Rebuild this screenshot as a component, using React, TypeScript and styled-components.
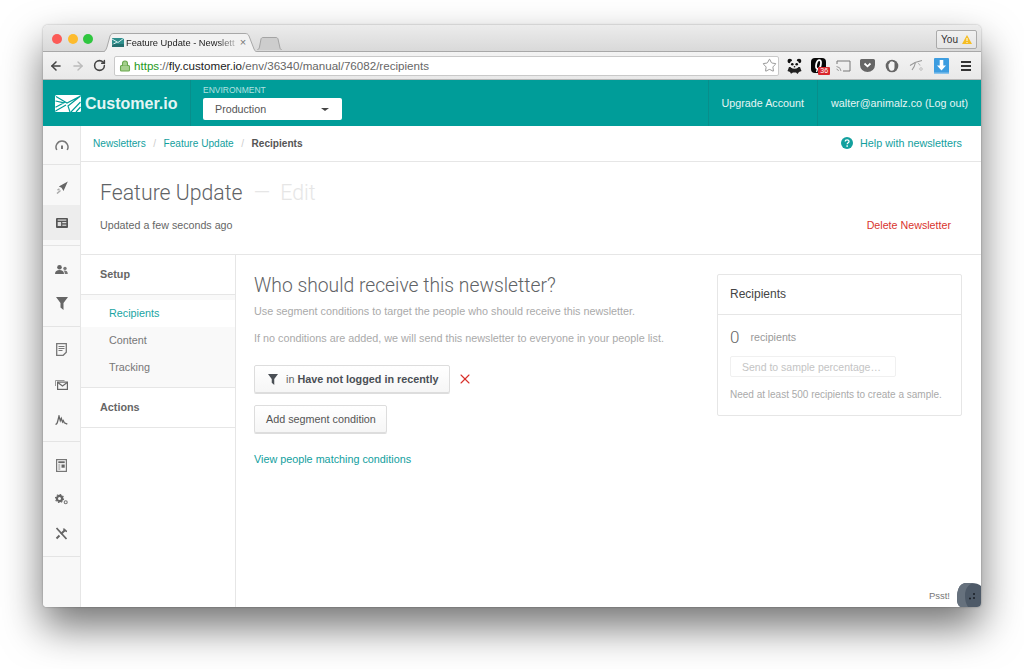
import styled, { createGlobalStyle } from "styled-components";
import { ArrowLeft, ArrowRight, RotateCw, Star, Lock, X } from "lucide-react";

const TEAL = "#009d99";
const LINK = "#12a09e";

const GlobalStyle = createGlobalStyle`
  html, body { margin: 0; padding: 0; background: #fff; }
  body {
    font-family: "Liberation Sans", Arial, sans-serif;
    font-size: 11px;
    color: #555;
    overflow: hidden;
  }
  * { box-sizing: border-box; }
`;

function GaugeIcon() {
  return (
    <svg width="14" height="11" viewBox="0 0 14 11">
      <path d="M1.800 10A6 6 0 1 1 12.200 10" fill="none" stroke="#777" strokeWidth="1.500" />
      <path d="M7 5.500v3.500" stroke="#666" strokeWidth="1.800" />
    </svg>
  );
}

function PlaneIcon() {
  return (
    <svg width="12" height="13" viewBox="0 0 12 13">
      <path d="M11.800.5 2.800 5.500l2.800 1.300L7.500 10z" fill="#666" />
      <path d="M3.500 8 1.500 9M4.500 9.500 1 12.500" stroke="#aaa" strokeWidth="1.500" />
    </svg>
  );
}

function NewsIcon() {
  return (
    <svg width="12" height="10" viewBox="0 0 12 10">
      <rect width="12" height="10" rx="1" fill="#555" />
      <rect x="1.700" y="1.500" width="8.600" height="1.200" fill="#ddd" />
      <rect x="1.700" y="4" width="3.400" height="4" fill="#ddd" />
      <rect x="6.300" y="4" width="4" height="1.200" fill="#ddd" />
      <rect x="6.300" y="6.600" width="4" height="1.200" fill="#ddd" />
    </svg>
  );
}

function PeopleIcon() {
  return (
    <svg width="13" height="9" viewBox="0 0 13 9">
      <circle cx="4.500" cy="2.300" r="2.300" fill="#666" />
      <path d="M0 9c0-3 2-4 4.500-4s4.500 1 4.500 4z" fill="#666" />
      <circle cx="10" cy="3.400" r="1.700" fill="#777" />
      <path d="M9.800 9c0-1.600-.4-2.600-1.200-3.300 2.200-.6 4.200.4 4.200 3.300z" fill="#777" />
    </svg>
  );
}

function FunnelIcon({ size = 12, color = "#666" }: { size?: number; color?: string }) {
  return (
    <svg width={size} height={size + 1} viewBox="0 0 12 13">
      <path d="M0 0h12L7.500 6v7L4.500 10.500V6z" fill={color} />
    </svg>
  );
}

function NoteIcon() {
  return (
    <svg width="11" height="13" viewBox="0 0 11 13">
      <path d="M.7.7h9.600v8.500L7.200 12.300H.7z" fill="none" stroke="#777" strokeWidth="1.300" />
      <path d="M2.500 3.500h6M2.500 5.500h6M2.500 7.500h4" stroke="#777" strokeWidth="1" />
    </svg>
  );
}

function MailStackIcon() {
  return (
    <svg width="13" height="10" viewBox="0 0 13 10">
      <path d="M.5 6V.5h9" fill="none" stroke="#999" strokeWidth="1" />
      <rect x="2.600" y="2.100" width="9.800" height="7.300" fill="#f8f8f8" stroke="#666" strokeWidth="1.200" />
      <path d="M2.800 2.500l4.700 3.500 4.700-3.500" fill="none" stroke="#666" strokeWidth="1.200" />
    </svg>
  );
}

function PulseIcon() {
  return (
    <svg width="13" height="10" viewBox="0 0 13 10">
      <path d="M.5 9.300c1.500 0 1.800-.8 2.300-3.500L4 1l1.300 4.800 1-2.500 1.200 3.700.8-1.300 1 2.100 3 1.400" fill="none" stroke="#666" strokeWidth="1.300" />
    </svg>
  );
}

function ReportIcon() {
  return (
    <svg width="11" height="13" viewBox="0 0 11 13">
      <rect x=".6" y=".6" width="9.800" height="11.800" fill="none" stroke="#777" strokeWidth="1.200" />
      <rect x="2.300" y="2.300" width="6.400" height="1.800" fill="#666" />
      <path d="M2.300 6h2M2.300 8h2M2.300 10h2" stroke="#888" strokeWidth="1" />
      <rect x="5.500" y="5.500" width="3.200" height="3.200" fill="#666" />
    </svg>
  );
}

function GearsIcon() {
  return (
    <svg width="13" height="11" viewBox="0 0 13 11">
      <circle cx="4.500" cy="4.500" r="2.600" fill="none" stroke="#666" strokeWidth="2.200" />
      <circle cx="4.500" cy="4.500" r="4" fill="none" stroke="#666" strokeWidth="1.200" strokeDasharray="1.500 1.600" />
      <circle cx="10.700" cy="8.200" r="1.500" fill="none" stroke="#777" strokeWidth="1.100" />
    </svg>
  );
}

function ToolsIcon() {
  return (
    <svg width="13" height="13" viewBox="0 0 13 13">
      <path d="M1.500 1 11.500 12" stroke="#666" strokeWidth="1.800" />
      <path d="M10.500 2.500 6 7M4.500 8.500 1.500 11.500" stroke="#666" strokeWidth="2" />
      <path d="M8.500 1.500c.5 1.500 1.500 2.500 3.500 3" fill="none" stroke="#666" strokeWidth="1.500" />
    </svg>
  );
}

function LogoIcon() {
  return (
    <svg width="26" height="17" viewBox="0 0 26 17">
      <rect width="26" height="17" rx="1.500" fill="#fff" />
      <path d="M1 1.500 12 8 25.500 1M.5 6l8.500 1.800-8.500 4.500M.5 16 11 10M25.500 1 13 11l2 6M25.500 7 16 17M25.500 12 21 17" fill="none" stroke={TEAL} strokeWidth="1.200" />
    </svg>
  );
}

function Favicon() {
  return (
    <svg width="12" height="9" viewBox="0 0 12 9">
      <rect width="12" height="9" fill="#2f8f8c" />
      <path d="M0 1l6 3.500L12 0M0 7l5-3" fill="none" stroke="#d8eeee" strokeWidth="1" />
      <rect y="6" width="12" height="3" fill="#1e5a5c" opacity=".6" />
    </svg>
  );
}

function TabShape() {
  return (
    <TabSvg viewBox="0 0 155 19" preserveAspectRatio="none">
      <path
        d="M0 19C3 19 4 17 5 14L8 3C9 1 10 .5 12 .5H143C145 .5 146 1 147 3L152 16C153 18 154 19 155 19"
        fill="#f2f2f2"
        stroke="#a8a8a8"
      />
    </TabSvg>
  );
}

function NewTabShape() {
  return (
    <TabSvg viewBox="0 0 25 13" preserveAspectRatio="none">
      <path d="M0 13C1 13 2 12 2.500 10L4 2C4.300 1 5 .5 6 .5H19C20 .5 20.700 1 21 2L23 11C23.300 12 24 13 25 13" fill="#cdcdcd" stroke="#a4a4a4" />
    </TabSvg>
  );
}

function WarningIcon() {
  return (
    <svg width="10" height="9" viewBox="0 0 10 9">
      <path d="M5 0 10 9H0z" fill="#f5bd23" />
      <path d="M5 3v3M5 7v1" stroke="#fff" strokeWidth="1" />
    </svg>
  );
}

function PandaIcon() {
  return (
    <svg width="15" height="16" viewBox="0 0 15 16">
      <circle cx="2.800" cy="3" r="2.300" fill="#111" />
      <circle cx="12" cy="3" r="2.300" fill="#111" />
      <path d="M2 9 .5 13l2.500 1 1 1.800L6 14.500h3l1.500 1.500 1.500-2 2.500-1L13 9z" fill="#222" />
      <ellipse cx="7.500" cy="6.500" rx="5" ry="4.300" fill="#efefef" />
      <circle cx="5.300" cy="6.300" r="1.300" fill="#111" />
      <circle cx="9.700" cy="6.300" r="1.300" fill="#111" />
      <circle cx="7.500" cy="8.800" r=".8" fill="#111" />
    </svg>
  );
}

function QuoteIcon() {
  return (
    <svg width="15" height="15" viewBox="0 0 15 15">
      <rect width="15" height="15" rx="4" fill="#080808" />
      <ellipse cx="7.500" cy="6.500" rx="2.300" ry="4.500" transform="rotate(12 7.500 6.500)" fill="none" stroke="#fff" strokeWidth="1.800" />
      <path d="M6.500 11 5.500 14" stroke="#fff" strokeWidth="1.300" />
    </svg>
  );
}

function CastIcon() {
  return (
    <svg width="15" height="12" viewBox="0 0 15 12">
      <path d="M1 4V1h13v10H7" fill="none" stroke="#777" strokeWidth="1" />
      <path d="M.5 6.500a5 5 0 0 1 4.500 4.500M.5 9a2.500 2.500 0 0 1 2 2" fill="none" stroke="#999" strokeWidth="1" />
    </svg>
  );
}

function PocketIcon() {
  return (
    <svg width="15" height="13" viewBox="0 0 15 13">
      <path d="M1.500 0h12A1.500 1.500 0 0 1 15 1.500V6a7.500 7 0 0 1-15 0V1.500A1.500 1.500 0 0 1 1.500 0z" fill="#666" />
      <path d="M4.500 4.500l3 2.800 3-2.800" fill="none" stroke="#fff" strokeWidth="1.800" />
    </svg>
  );
}

function ShieldIcon() {
  return (
    <svg width="14" height="14" viewBox="0 0 14 14">
      <circle cx="7" cy="7" r="6.300" fill="#666" />
      <path d="M3.500 6c0-1 .5-1.500 1-1.500L5 3c.5-.7 1.200-.7 1.500-.4.500-.5 1.300-.3 1.500.4.700-.3 1.500.2 1.500 1V8.500C9.500 10.500 8.500 11.800 6.800 11.800 5 11.800 3.500 10 3.500 6z" fill="#f4f4f4" />
    </svg>
  );
}

function StrokeIcon() {
  return (
    <svg width="16" height="13" viewBox="0 0 16 13">
      <path d="M1 6.500 6 3.500 13 1.500M6.500 3.500C6 6 5 8.500 3 11" fill="none" stroke="#999" strokeWidth="1.100" />
      <path d="M9 4.500c1 .2 1.800.8 2 2" fill="none" stroke="#aaa" strokeWidth="1" />
      <circle cx="12" cy="10" r="1.300" fill="none" stroke="#bbb" strokeWidth=".9" />
    </svg>
  );
}

function DownloadIcon() {
  return (
    <svg width="15" height="16" viewBox="0 0 15 16">
      <rect width="15" height="16" rx="1" fill="#3d9de0" />
      <path d="M5.700 2h3.600v5.500h2.700L7.500 12.500 3 7.500h2.700z" fill="#fff" />
      <rect y="14.500" width="15" height="1.500" fill="#8ac4ec" />
    </svg>
  );
}

function HelpIcon() {
  return (
    <svg width="12" height="12" viewBox="0 0 12 12">
      <circle cx="6" cy="6" r="6" fill={LINK} />
      <path d="M4.200 4.600c0-2.300 3.800-2.300 3.800-.1 0 1.300-1.800 1.400-1.800 2.700" fill="none" stroke="#fff" strokeWidth="1.300" />
      <rect x="5.400" y="8.300" width="1.500" height="1.500" fill="#fff" />
    </svg>
  );
}

function Avatar() {
  return (
    <svg width="24" height="24" viewBox="0 0 24 24">
      <path d="M8 0c6-.3 13 0 16 3v21H4C1 23 0 20 0 15 0 8 2 1 8 0z" fill="#4e5a68" />
      <path d="M8 0h8C10 2 8 7 8 13c0 4 1 8 3 11H4C1 23 0 20 0 15 0 8 2 1 8 0z" fill="#66717d" />
      <circle cx="17" cy="11" r="1" fill="#1a1f26" />
      <circle cx="13" cy="15.500" r="1" fill="#1a1f26" />
      <circle cx="17" cy="15" r="1" fill="#1a1f26" />
    </svg>
  );
}

export default function App() {
  return (
    <Page>
      <GlobalStyle />
      <BrowserWindow>
        <TabStrip>
          <Lights>
            <Light color="#fc5b57" />
            <Light color="#fdbb2d" />
            <Light color="#2fc63f" />
          </Lights>
          <Tab>
            <TabShape />
            <Favicon />
            <TabTitle>Feature Update - Newslett</TabTitle>
            <TabClose>×</TabClose>
          </Tab>
          <NewTab>
            <NewTabShape />
          </NewTab>
          <UserChip>
            You <WarningIcon />
          </UserChip>
        </TabStrip>
        <Toolbar>
          <NavButtons>
            <ArrowLeft size={14} strokeWidth={2.6} color="#444" />
            <ArrowRight size={14} strokeWidth={2.4} color="#bbb" />
            <RotateCw size={13} strokeWidth={2.8} color="#444" />
          </NavButtons>
          <AddressBar>
            <Lock size={12} strokeWidth={2.2} color="#6aa84f" fill="#a5cf8e" />
            <Url>
              <Https>https</Https>://<Host>fly.customer.io</Host>/env/36340/manual/76082/recipients
            </Url>
            <Star size={15} strokeWidth={1.2} color="#777" />
          </AddressBar>
          <Extensions>
            <PandaIcon />
            <QuoteSlot>
              <QuoteIcon />
              <Count>36</Count>
            </QuoteSlot>
            <CastIcon />
            <PocketIcon />
            <ShieldIcon />
            <StrokeIcon />
            <DownloadIcon />
            <Burger>
              <span />
              <span />
              <span />
            </Burger>
          </Extensions>
        </Toolbar>
        <Header>
          <Brand>
            <LogoIcon />
            <BrandName>Customer.io</BrandName>
          </Brand>
          <EnvBlock>
            <EnvLabel>ENVIRONMENT</EnvLabel>
            <EnvSelect>
              Production
              <Caret />
            </EnvSelect>
          </EnvBlock>
          <HeaderLink>Upgrade Account</HeaderLink>
          <HeaderLink>walter@animalz.co (Log out)</HeaderLink>
        </Header>
        <Body>
          <Rail>
            <RailGroup height={39} pad={1}>
              <RailItem height={37}><GaugeIcon /></RailItem>
            </RailGroup>
            <RailGroup height={81} pad={4}>
              <RailItem height={36}><PlaneIcon /></RailItem>
              <RailItem height={35} active><NewsIcon /></RailItem>
            </RailGroup>
            <RailGroup height={81} pad={6}>
              <RailItem height={34}><PeopleIcon /></RailItem>
              <RailItem height={34}><FunnelIcon size={12} /></RailItem>
            </RailGroup>
            <RailGroup height={115} pad={5}>
              <RailItem height={35}><NoteIcon /></RailItem>
              <RailItem height={35}><MailStackIcon /></RailItem>
              <RailItem height={35}><PulseIcon /></RailItem>
            </RailGroup>
            <RailGroup height={115} pad={6}>
              <RailItem height={34}><ReportIcon /></RailItem>
              <RailItem height={34}><GearsIcon /></RailItem>
              <RailItem height={34}><ToolsIcon /></RailItem>
            </RailGroup>
          </Rail>
          <Main>
            <Breadcrumbs>
              <Crumb>Newsletters</Crumb>
              <Slash>/</Slash>
              <Crumb>Feature Update</Crumb>
              <Slash>/</Slash>
              <CurrentCrumb>Recipients</CurrentCrumb>
              <HelpLink>
                <HelpIcon />
                Help with newsletters
              </HelpLink>
            </Breadcrumbs>
            <TitleBlock>
              <Title>
                Feature Update <TitleEdit>— Edit</TitleEdit>
              </Title>
              <TitleMeta>
                <span>Updated a few seconds ago</span>
                <DeleteLink>Delete Newsletter</DeleteLink>
              </TitleMeta>
            </TitleBlock>
            <Columns>
              <SubNav>
                <SubNavHead>Setup</SubNavHead>
                <SubNavList>
                  <SubNavItem active>Recipients</SubNavItem>
                  <SubNavItem>Content</SubNavItem>
                  <SubNavItem>Tracking</SubNavItem>
                </SubNavList>
                <SubNavHead>Actions</SubNavHead>
              </SubNav>
              <Content>
                <Form>
                  <Question>Who should receive this newsletter?</Question>
                  <Hint>Use segment conditions to target the people who should receive this newsletter.</Hint>
                  <Hint>If no conditions are added, we will send this newsletter to everyone in your people list.</Hint>
                  <ConditionRow>
                    <ConditionButton>
                      <FunnelIcon size={10} color="#4a4f55" />
                      <ConditionText>
                        in <b>Have not logged in recently</b>
                      </ConditionText>
                    </ConditionButton>
                    <X size={16} strokeWidth={1.6} color="#d8302a" />
                  </ConditionRow>
                  <AddRow>
                    <Button>Add segment condition</Button>
                  </AddRow>
                  <MatchLink>View people matching conditions</MatchLink>
                </Form>
                <Panel>
                  <PanelHead>Recipients</PanelHead>
                  <PanelBody>
                    <CountLine>
                      <Zero>0</Zero>
                      <span>recipients</span>
                    </CountLine>
                    <SampleButton>Send to sample percentage…</SampleButton>
                    <SampleNote>Need at least 500 recipients to create a sample.</SampleNote>
                  </PanelBody>
                </Panel>
              </Content>
            </Columns>
            <Psst>Psst!</Psst>
            <AvatarSlot>
              <Avatar />
            </AvatarSlot>
          </Main>
        </Body>
      </BrowserWindow>
    </Page>
  );
}

const Page = styled.div`
  width: 1024px;
  height: 669px;
  padding: 25px 43px 0;
`;

const BrowserWindow = styled.div`
  width: 938px;
  height: 582px;
  display: flex;
  flex-direction: column;
  border-radius: 5px 5px 4px 4px;
  overflow: hidden;
  background: #fff;
  box-shadow: 0 20px 40px rgba(0, 0, 0, 0.55), 0 0 2px rgba(0, 0, 0, 0.35);
`;

const TabStrip = styled.div`
  height: 27px;
  flex: none;
  display: flex;
  align-items: flex-end;
  padding-left: 9px;
  background: linear-gradient(#ececec, #d9d9d9);
  border-bottom: 1px solid #a8a8a8;
  position: relative;
`;

const Lights = styled.div`
  display: flex;
  gap: 5.5px;
  align-self: flex-start;
  margin-top: 9px;
  margin-right: 9px;
`;

const Light = styled.i<{ color: string }>`
  width: 10px;
  height: 10px;
  border-radius: 50%;
  background: ${(p) => p.color};
`;

const Tab = styled.div`
  width: 155px;
  height: 19px;
  margin-bottom: -1px;
  display: flex;
  align-items: center;
  gap: 2px;
  padding: 0 10px;
  position: relative;
  z-index: 1;
`;

const TabSvg = styled.svg`
  position: absolute;
  inset: 0;
  width: 100%;
  height: 100%;
  z-index: -1;
`;

const TabTitle = styled.span`
  flex: 1;
  white-space: nowrap;
  font-size: 9.3px;
  color: #222;
  -webkit-mask-image: linear-gradient(90deg, #000 82%, rgba(0, 0, 0, 0.2));
  mask-image: linear-gradient(90deg, #000 82%, rgba(0, 0, 0, 0.2));
`;

const TabClose = styled.span`
  width: 8px;
  font-size: 11px;
  line-height: 1;
  text-align: center;
  color: #777;
`;

const NewTab = styled.div`
  width: 25px;
  height: 13px;
  margin-bottom: 1px;
  position: relative;
  z-index: 0;
`;

const UserChip = styled.div`
  position: absolute;
  top: 5px;
  right: 4px;
  width: 41px;
  height: 19px;
  display: flex;
  align-items: center;
  justify-content: center;
  gap: 4px;
  font-size: 10px;
  color: #333;
  background: linear-gradient(#f1f1f1, #e5e5e5);
  border: 1px solid #aaa;
  border-radius: 2px;
`;

const Toolbar = styled.div`
  height: 28px;
  flex: none;
  display: flex;
  align-items: center;
  padding-left: 6px;
  background: linear-gradient(#f3f3f3, #e9e9e9);
  border-bottom: 1px solid #b8b8b8;
`;

const NavButtons = styled.div`
  display: flex;
  align-items: center;
  gap: 8px;
  margin-right: 8px;
`;

const AddressBar = styled.div`
  width: 665px;
  height: 20px;
  display: flex;
  align-items: center;
  gap: 3px;
  padding: 0 1px 0 4px;
  background: #fff;
  border: 1px solid #c9c9c9;
  border-radius: 2px;
`;

const Url = styled.span`
  flex: 1;
  font-size: 11.6px;
  color: #666;
  white-space: nowrap;
`;

const Https = styled.span`
  color: #1f9a22;
`;

const Host = styled.span`
  color: #222;
`;

const Extensions = styled.div`
  display: grid;
  grid-template-columns: repeat(8, 24.5px);
  justify-items: center;
  align-items: center;
  margin-left: 3px;
`;

const QuoteSlot = styled.div`
  position: relative;
  height: 15px;
`;

const Count = styled.span`
  position: absolute;
  left: 7px;
  top: 9px;
  width: 12px;
  height: 8px;
  border-radius: 1px;
  background: #d9262c;
  color: #fff;
  font-size: 7px;
  line-height: 8px;
  text-align: center;
`;

const Burger = styled.div`
  width: 10px;
  display: flex;
  flex-direction: column;
  gap: 2px;
  span {
    height: 2px;
    background: #333;
  }
`;

const Header = styled.header`
  height: 46px;
  flex: none;
  display: flex;
  background: ${TEAL};
  color: #e6f5f5;
`;

const Brand = styled.div`
  width: 148px;
  display: flex;
  align-items: center;
  gap: 4px;
  padding: 1px 0 0 12px;
  border-right: 1px solid #088e8b;
`;

const BrandName = styled.span`
  font-size: 16px;
  font-weight: bold;
  color: #e4f5f4;
`;

const EnvBlock = styled.div`
  flex: 1;
  padding: 5px 0 0 12px;
`;

const EnvLabel = styled.div`
  font-size: 8.5px;
  line-height: 10px;
  color: #b4e1e0;
`;

const EnvSelect = styled.div`
  width: 139px;
  height: 22px;
  margin-top: 3px;
  padding: 0 13px 0 12px;
  display: flex;
  align-items: center;
  justify-content: space-between;
  background: #fff;
  border-radius: 2px;
  font-size: 10.7px;
  color: #555;
`;

const Caret = styled.i`
  border-left: 4px solid transparent;
  border-right: 4px solid transparent;
  border-top: 3px solid #444;
`;

const HeaderLink = styled.div`
  display: flex;
  align-items: center;
  padding: 0 13px;
  font-size: 10.75px;
  border-left: 1px solid #088e8b;
`;

const Body = styled.div`
  flex: 1;
  min-height: 0;
  display: flex;
`;

const Rail = styled.nav`
  width: 38px;
  flex: none;
  background: #f8f8f8;
  border-right: 1px solid #e6e6e6;
`;

const RailGroup = styled.div<{ height: number; pad?: number }>`
  height: ${(p) => p.height}px;
  padding-top: ${(p) => p.pad ?? 0}px;
  border-bottom: 1px solid #e4e4e4;
`;

const RailItem = styled.div<{ height: number; active?: boolean }>`
  height: ${(p) => p.height}px;
  display: flex;
  align-items: center;
  justify-content: center;
  background: ${(p) => (p.active ? "#ededed" : "transparent")};
`;

const Main = styled.main`
  flex: 1;
  min-width: 0;
  display: flex;
  flex-direction: column;
  position: relative;
`;

const Breadcrumbs = styled.div`
  height: 36px;
  flex: none;
  display: flex;
  align-items: center;
  padding: 0 19px 1px 12px;
  border-bottom: 1px solid #e6e6e6;
  font-size: 10.1px;
`;

const Crumb = styled.a`
  color: ${LINK};
`;

const Slash = styled.span`
  margin: 0 7.5px;
  color: #ccc;
`;

const CurrentCrumb = styled.span`
  font-weight: bold;
  color: #555;
`;

const HelpLink = styled.a`
  margin-left: auto;
  display: flex;
  align-items: center;
  gap: 7px;
  font-size: 10.8px;
  color: ${LINK};
`;

const TitleBlock = styled.div`
  height: 93px;
  flex: none;
  padding: 18px 30px 0 19px;
  border-bottom: 1px solid #e6e6e6;
`;

const Title = styled.h1`
  margin: 0;
  font-size: 21.25px;
  line-height: 25px;
  font-family: Roboto, "Liberation Sans", sans-serif;
  font-weight: 300;
  color: #5f6366;
`;

const TitleEdit = styled.span`
  margin-left: 6px;
  word-spacing: 5px;
  color: #e6e6e6;
`;

const TitleMeta = styled.div`
  margin-top: 13px;
  display: flex;
  justify-content: space-between;
  font-size: 10.7px;
  line-height: 14px;
  color: #666;
`;

const DeleteLink = styled.a`
  color: #d9342e;
`;

const Columns = styled.div`
  flex: 1;
  min-height: 0;
  display: flex;
`;

const SubNav = styled.div`
  width: 155px;
  flex: none;
  border-right: 1px solid #e6e6e6;
`;

const SubNavHead = styled.div`
  height: 40px;
  display: flex;
  align-items: center;
  padding: 0 0 2px 19px;
  font-size: 10.8px;
  font-weight: bold;
  color: #666;
  border-bottom: 1px solid #e6e6e6;
`;

const SubNavList = styled.div`
  height: 93px;
  padding-top: 5px;
  background: #f9f9f9;
  border-bottom: 1px solid #e6e6e6;
`;

const SubNavItem = styled.div<{ active?: boolean }>`
  height: 27px;
  display: flex;
  align-items: center;
  padding: 0 0 2px 28px;
  font-size: 10.8px;
  color: ${(p) => (p.active ? "#19a5a3" : "#777")};
  background: ${(p) => (p.active ? "#fff" : "transparent")};
`;

const Content = styled.div`
  flex: 1;
  min-width: 0;
  display: flex;
  justify-content: space-between;
  padding: 19px 19px 0 18px;
`;

const Form = styled.div`
  flex: 1;
`;

const Question = styled.h2`
  margin: 0 0 6px;
  font-size: 19.3px;
  line-height: 24px;
  font-family: Roboto, "Liberation Sans", sans-serif;
  font-weight: 300;
  color: #5f6366;
`;

const Hint = styled.p`
  margin: 0 0 13px;
  font-size: 10.8px;
  line-height: 14px;
  color: #aaa;
`;

const ConditionRow = styled.div`
  margin-top: 20px;
  display: flex;
  align-items: center;
  gap: 7px;
`;

const AddRow = styled.div`
  margin-top: 12px;
  display: flex;
`;

const Button = styled.div`
  height: 28px;
  display: flex;
  align-items: center;
  gap: 8px;
  padding: 0 10.5px 0 11px;
  font-size: 10.8px;
  color: #555;
  background: linear-gradient(#fff, #f6f6f6);
  border: 1px solid #ddd;
  border-radius: 2px;
  box-shadow: 0 1px 0 #ddd;
`;

const ConditionButton = styled(Button)`
  padding: 0 11px 0 13px;
`;

const ConditionText = styled.span`
  color: #666;
  b {
    color: #4a4f55;
  }
`;

const MatchLink = styled.a`
  display: block;
  margin-top: 20px;
  font-size: 10.8px;
  color: ${LINK};
`;

const Panel = styled.aside`
  width: 245px;
  height: 142px;
  flex: none;
  border: 1px solid #e6e6e6;
  border-radius: 2px;
`;

const PanelHead = styled.div`
  height: 40px;
  display: flex;
  align-items: center;
  padding: 0 0 2px 12px;
  font-size: 12px;
  color: #444;
  border-bottom: 1px solid #e6e6e6;
`;

const PanelBody = styled.div`
  padding: 12px 12px 0;
`;

const CountLine = styled.div`
  display: flex;
  align-items: center;
  gap: 11px;
  height: 20px;
  font-size: 10.7px;
  color: #999;
`;

const Zero = styled.span`
  font-size: 17px;
  font-family: Roboto, "Liberation Sans", sans-serif;
  font-weight: 300;
  color: #666;
`;

const SampleButton = styled.div`
  width: 166px;
  height: 21px;
  margin-top: 9px;
  display: flex;
  align-items: center;
  padding-left: 11px;
  font-size: 10.5px;
  color: #c4c4c4;
  border: 1px solid #f0f0f0;
  border-radius: 2px;
`;

const SampleNote = styled.p`
  margin: 11px 0 0;
  font-size: 10px;
  line-height: 13px;
  color: #aaa;
`;

const Psst = styled.div`
  position: absolute;
  right: 31px;
  bottom: 6px;
  font-size: 9.5px;
  color: #777;
`;

const AvatarSlot = styled.div`
  position: absolute;
  right: 0;
  bottom: 0;
  height: 24px;
`;
